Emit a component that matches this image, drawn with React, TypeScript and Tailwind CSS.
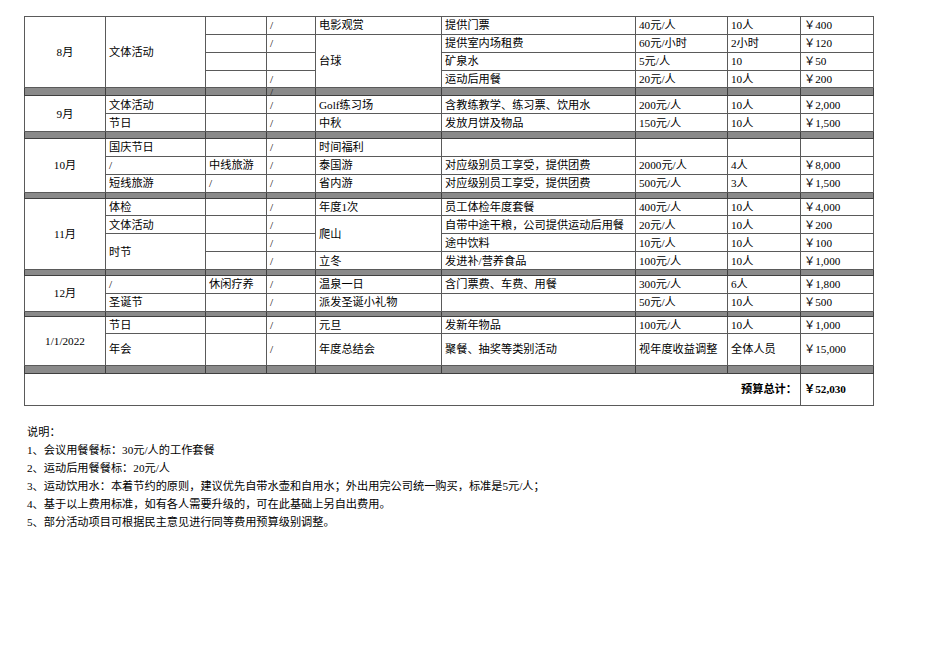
import React from "react";

const td = "border border-[#5a5a5a] px-[3px] py-0 text-left align-middle whitespace-nowrap overflow-hidden";
const tdc = "border border-[#5a5a5a] px-[3px] py-0 text-center align-middle whitespace-nowrap overflow-hidden";
const gcell = "border border-[#3f3f3f] bg-[#8a8a8a] p-0";
const r = "h-[17.85px]";

function Gray({ h, slash }: { h: string; slash?: boolean }) {
  return (
    <tr className={h}>
      <td className={gcell}></td>
      <td className={gcell}></td>
      <td className={gcell}></td>
      <td className={gcell}>
        {slash ? (
          <div className="h-[7px] overflow-hidden pl-[3px] leading-[8px] text-[#222]">/</div>
        ) : null}
      </td>
      <td className={gcell}></td>
      <td className={gcell}></td>
      <td className={gcell}></td>
      <td className={gcell}></td>
      <td className={gcell}></td>
    </tr>
  );
}

export default function App() {
  return (
    <div className="min-h-[672px] w-[950px] bg-white text-black font-['Liberation_Serif','Noto_Sans_CJK_SC',serif]">
      <table className="ml-[24px] mt-[16px] w-[849px] table-fixed border-collapse text-[11.2px] leading-[14px]">
        <colgroup>
          <col className="w-[81px]" />
          <col className="w-[100px]" />
          <col className="w-[61px]" />
          <col className="w-[49px]" />
          <col className="w-[126px]" />
          <col className="w-[194px]" />
          <col className="w-[92px]" />
          <col className="w-[73px]" />
          <col className="w-[73px]" />
        </colgroup>
        <tbody>
          {/* 8月 */}
          <tr className={r}>
            <td className={tdc} rowSpan={4}>8月</td>
            <td className={td} rowSpan={4}>文体活动</td>
            <td className={td}></td>
            <td className={td}>/</td>
            <td className={td}>电影观赏</td>
            <td className={td}>提供门票</td>
            <td className={td}>40元/人</td>
            <td className={td}>10人</td>
            <td className={td}>￥400</td>
          </tr>
          <tr className={r}>
            <td className={td}></td>
            <td className={td}>/</td>
            <td className={td} rowSpan={3}>台球</td>
            <td className={td}>提供室内场租费</td>
            <td className={td}>60元/小时</td>
            <td className={td}>2小时</td>
            <td className={td}>￥120</td>
          </tr>
          <tr className={r}>
            <td className={td}></td>
            <td className={td}></td>
            <td className={td}>矿泉水</td>
            <td className={td}>5元/人</td>
            <td className={td}>10</td>
            <td className={td}>￥50</td>
          </tr>
          <tr className={r}>
            <td className={td}></td>
            <td className={td}>/</td>
            <td className={td}>运动后用餐</td>
            <td className={td}>20元/人</td>
            <td className={td}>10人</td>
            <td className={td}>￥200</td>
          </tr>
          <Gray h="h-[8px]" slash />

          {/* 9月 */}
          <tr className={r}>
            <td className={tdc} rowSpan={2}>9月</td>
            <td className={td}>文体活动</td>
            <td className={td}></td>
            <td className={td}>/</td>
            <td className={td}>Golf练习场</td>
            <td className={td}>含教练教学、练习票、饮用水</td>
            <td className={td}>200元/人</td>
            <td className={td}>10人</td>
            <td className={td}>￥2,000</td>
          </tr>
          <tr className={r}>
            <td className={td}>节日</td>
            <td className={td}></td>
            <td className={td}>/</td>
            <td className={td}>中秋</td>
            <td className={td}>发放月饼及物品</td>
            <td className={td}>150元/人</td>
            <td className={td}>10人</td>
            <td className={td}>￥1,500</td>
          </tr>
          <Gray h="h-[7px]" />

          {/* 10月 */}
          <tr className={r}>
            <td className={tdc} rowSpan={3}>10月</td>
            <td className={td}>国庆节日</td>
            <td className={td}></td>
            <td className={td}>/</td>
            <td className={td}>时间福利</td>
            <td className={td}></td>
            <td className={td}></td>
            <td className={td}></td>
            <td className={td}></td>
          </tr>
          <tr className={r}>
            <td className={td}>/</td>
            <td className={td}>中线旅游</td>
            <td className={td}>/</td>
            <td className={td}>泰国游</td>
            <td className={td}>对应级别员工享受，提供团费</td>
            <td className={td}>2000元/人</td>
            <td className={td}>4人</td>
            <td className={td}>￥8,000</td>
          </tr>
          <tr className={r}>
            <td className={td}>短线旅游</td>
            <td className={td}>/</td>
            <td className={td}>/</td>
            <td className={td}>省内游</td>
            <td className={td}>对应级别员工享受，提供团费</td>
            <td className={td}>500元/人</td>
            <td className={td}>3人</td>
            <td className={td}>￥1,500</td>
          </tr>
          <Gray h="h-[6px]" />

          {/* 11月 */}
          <tr className={r}>
            <td className={tdc} rowSpan={4}>11月</td>
            <td className={td}>体检</td>
            <td className={td}></td>
            <td className={td}>/</td>
            <td className={td}>年度1次</td>
            <td className={td}>员工体检年度套餐</td>
            <td className={td}>400元/人</td>
            <td className={td}>10人</td>
            <td className={td}>￥4,000</td>
          </tr>
          <tr className={r}>
            <td className={td}>文体活动</td>
            <td className={td}></td>
            <td className={td}>/</td>
            <td className={td} rowSpan={2}>爬山</td>
            <td className={td}>自带中途干粮，公司提供运动后用餐</td>
            <td className={td}>20元/人</td>
            <td className={td}>10人</td>
            <td className={td}>￥200</td>
          </tr>
          <tr className={r}>
            <td className={td} rowSpan={2}>时节</td>
            <td className={td}></td>
            <td className={td}>/</td>
            <td className={td}>途中饮料</td>
            <td className={td}>10元/人</td>
            <td className={td}>10人</td>
            <td className={td}>￥100</td>
          </tr>
          <tr className={r}>
            <td className={td}></td>
            <td className={td}>/</td>
            <td className={td}>立冬</td>
            <td className={td}>发进补/营养食品</td>
            <td className={td}>100元/人</td>
            <td className={td}>10人</td>
            <td className={td}>￥1,000</td>
          </tr>
          <Gray h="h-[6px]" />

          {/* 12月 */}
          <tr className={r}>
            <td className={tdc} rowSpan={2}>12月</td>
            <td className={td}>/</td>
            <td className={td}>休闲疗养</td>
            <td className={td}>/</td>
            <td className={td}>温泉一日</td>
            <td className={td}>含门票费、车费、用餐</td>
            <td className={td}>300元/人</td>
            <td className={td}>6人</td>
            <td className={td}>￥1,800</td>
          </tr>
          <tr className={r}>
            <td className={td}>圣诞节</td>
            <td className={td}></td>
            <td className={td}>/</td>
            <td className={td}>派发圣诞小礼物</td>
            <td className={td}></td>
            <td className={td}>50元/人</td>
            <td className={td}>10人</td>
            <td className={td}>￥500</td>
          </tr>
          <Gray h="h-[5px]" />

          {/* 1/1/2022 */}
          <tr className="h-[17px]">
            <td className={tdc} rowSpan={2}>1/1/2022</td>
            <td className={td}>节日</td>
            <td className={td}></td>
            <td className={td}>/</td>
            <td className={td}>元旦</td>
            <td className={td}>发新年物品</td>
            <td className={td}>100元/人</td>
            <td className={td}>10人</td>
            <td className={td}>￥1,000</td>
          </tr>
          <tr className="h-[32px]">
            <td className={td}>年会</td>
            <td className={td}></td>
            <td className={td}>/</td>
            <td className={td}>年度总结会</td>
            <td className={td}>聚餐、抽奖等类别活动</td>
            <td className={td}>视年度收益调整</td>
            <td className={td}>全体人员</td>
            <td className={td}>￥15,000</td>
          </tr>
          <Gray h="h-[8px]" />

          {/* total */}
          <tr className="h-[32px]">
            <td className="border border-[#5a5a5a] px-[3px] py-0 text-right align-middle font-bold whitespace-nowrap" colSpan={8}>
              预算总计：
            </td>
            <td className="border border-[#5a5a5a] px-[3px] py-0 text-left align-middle font-bold whitespace-nowrap">
              ￥52,030
            </td>
          </tr>
        </tbody>
      </table>

      <div className="ml-[24px] mt-[17px] pl-[3px] text-[11.2px] leading-[18px]">
        <div>说明：</div>
        <div>1、会议用餐餐标：30元/人的工作套餐</div>
        <div>2、运动后用餐餐标：20元/人</div>
        <div>3、运动饮用水：本着节约的原则，建议优先自带水壶和自用水；外出用完公司统一购买，标准是5元/人；</div>
        <div>4、基于以上费用标准，如有各人需要升级的，可在此基础上另自出费用。</div>
        <div>5、部分活动项目可根据民主意见进行同等费用预算级别调整。</div>
      </div>
    </div>
  );
}
